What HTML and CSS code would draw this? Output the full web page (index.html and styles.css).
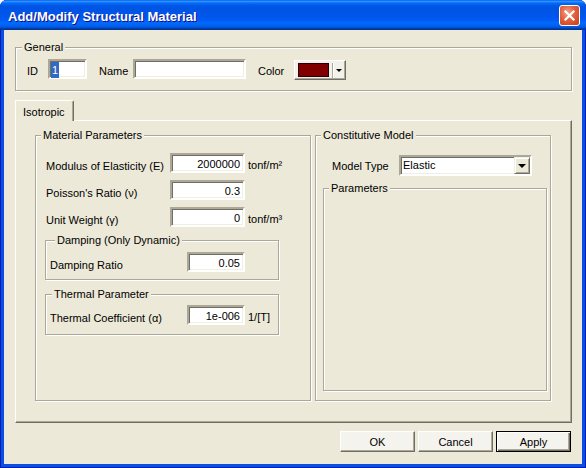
FILE: index.html
```html
<!DOCTYPE html>
<html lang="en">
<head>
    <meta charset="UTF-8">
    <title>Add/Modify Structural Material</title>
    <link rel="stylesheet" href="styles.css">
</head>
<body>
    <div class="window">
        <div class="titlebar">
            <span class="title">Add/Modify Structural Material</span>
            <span class="close-btn">
                <svg width="13" height="13" viewBox="0 0 13 13">
                    <path d="M2.5 2.5 L10.5 10.5 M10.5 2.5 L2.5 10.5" stroke="#fff" stroke-width="2.2" stroke-linecap="square"/>
                </svg>
            </span>
        </div>

        <div class="client">
            <!-- general info -->
            <fieldset class="group general">
                <legend>General</legend>
                <div class="group-body general-row">
                    <span class="lbl lbl-id">ID</span>
                    <div class="edit edit-id"><span class="selected">1</span></div>
                    <span class="lbl lbl-name">Name</span>
                    <div class="edit edit-name"></div>
                    <span class="lbl lbl-color">Color</span>
                    <div class="color-pick">
                        <span class="swatch"></span>
                        <span class="pick-sep"></span>
                        <span class="pick-arrow"></span>
                    </div>
                </div>
            </fieldset>

            <div class="tabs">
                <div class="tab">Isotropic</div>
            </div>

            <div class="tab-page">
                <fieldset class="group material">
                    <legend>Material Parameters</legend>
                    <div class="group-body">
                        <div class="field">
                            <span class="lbl">Modulus of Elasticity (E)</span>
                            <div class="edit edit-wide">2000000</div>
                            <span class="unit">tonf/m²</span>
                        </div>
                        <div class="field">
                            <span class="lbl">Poisson's Ratio (ν)</span>
                            <div class="edit edit-wide">0.3</div>
                        </div>
                        <div class="field">
                            <span class="lbl">Unit Weight (γ)</span>
                            <div class="edit edit-wide">0</div>
                            <span class="unit">tonf/m³</span>
                        </div>

                        <fieldset class="group sub damping">
                            <legend>Damping (Only Dynamic)</legend>
                            <div class="group-body">
                                <div class="field">
                                    <span class="lbl">Damping Ratio</span>
                                    <div class="edit edit-small">0.05</div>
                                </div>
                            </div>
                        </fieldset>

                        <fieldset class="group sub thermal">
                            <legend>Thermal Parameter</legend>
                            <div class="group-body">
                                <div class="field">
                                    <span class="lbl">Thermal Coefficient (α)</span>
                                    <div class="edit edit-small">1e-006</div>
                                    <span class="unit">1/[T]</span>
                                </div>
                            </div>
                        </fieldset>
                    </div>
                </fieldset>

                <fieldset class="group constitutive">
                    <legend>Constitutive Model</legend>
                    <div class="group-body">
                        <div class="field model-row">
                            <span class="lbl">Model Type</span>
                            <div class="combo">
                                <span class="combo-text">Elastic</span>
                                <span class="combo-btn"><span class="combo-arrow"></span></span>
                            </div>
                        </div>
                        <fieldset class="group params">
                            <legend>Parameters</legend>
                        </fieldset>
                    </div>
                </fieldset>
            </div>

            <div class="buttons">
                <button class="btn">OK</button>
                <button class="btn">Cancel</button>
                <button class="btn btn-default">Apply</button>
            </div>
        </div>
    </div>
</body>
</html>
```

FILE: styles.css
```css
* {
    box-sizing: border-box;
}

body {
    margin: 0;
    font-family: "Liberation Sans", Arial, sans-serif;
    font-size: 11px;
    color: #000;
    background: #fff;
}

/* window frame */
.window {
    width: 586px;
    height: 468px;
    display: flex;
    flex-direction: column;
    background: #0a4fe4;
    border-radius: 7px 7px 0 0;
    overflow: hidden;
    box-shadow: inset 1px 0 0 #0019b0, inset -1px 0 0 #0019b0, inset 0 -1px 0 #0019b0;
}

.titlebar {
    height: 30px;
    flex: none;
    display: flex;
    justify-content: space-between;
    align-items: flex-start;
    padding: 0 6px 0 8px;
    background: linear-gradient(to bottom, #0058ee 0%, #3593ff 4%, #288eff 6%, #127dff 8%, #036ffc 10%, #0262ee 14%, #0057e5 20%, #0054e3 24%, #0055eb 56%, #005bf5 66%, #026afe 76%, #0062ef 86%, #0052d6 92%, #0040ab 94%, #003092 100%);
}

.title {
    padding-top: 3px;
    line-height: 28px;
    font-size: 13px;
    font-weight: bold;
    color: #fff;
    text-shadow: 1px 1px 0 #0f1089;
}

.close-btn {
    margin-top: 5px;
    width: 21px;
    height: 21px;
    display: flex;
    align-items: center;
    justify-content: center;
    border: 1px solid #fff;
    border-radius: 3px;
    background: radial-gradient(circle at 40% 35%, #f2a58c 0%, #e2603f 45%, #c93b1d 100%);
}

.client {
    flex: 1;
    margin: 0 4px 4px;
    padding: 11px 10px 0 11px;
    background: #ece9d8;
}

/* group boxes */
.group {
    margin: 0;
    padding: 0;
    min-width: 0;
    border: 1px solid #aca899;
    box-shadow: 1px 1px 0 #fff, inset 1px 1px 0 #fff;
}

.group legend {
    padding: 0 2px;
    margin-left: 5px;
    line-height: 13px;
    height: 13px;
    background: #ece9d8;
}

.lbl {
    line-height: 13px;
    margin-top: 6px;
    white-space: nowrap;
}

.unit {
    line-height: 13px;
    margin-top: 6px;
    margin-left: 3px;
}

/* sunken edit box */
.edit {
    height: 20px;
    padding: 3px 3px 0;
    line-height: 13px;
    text-align: right;
    background: #fff;
    border: 2px solid;
    border-color: #aca899 #fff #fff #aca899;
    box-shadow: inset 1px 1px 0 #716f64, inset -1px -1px 0 #f1efe2;
    white-space: nowrap;
}

.general legend {
    margin-left: 6px;
}

.general-row {
    display: flex;
    align-items: flex-start;
    padding: 5px 0 10px 11px;
}

.lbl-id {
    width: 21px;
}

.edit-id {
    width: 39px;
    text-align: left;
    padding: 1px 1px 0;
}

.selected {
    display: inline-block;
    padding: 2px 1px 1px;
    background: #316ac5;
    color: #fff;
}

.lbl-name {
    width: 34px;
    margin-left: 12px;
}

.edit-name {
    width: 113px;
}

.lbl-color {
    width: 36px;
    margin-left: 12px;
}

/* color picker button */
.color-pick {
    width: 52px;
    height: 20px;
    display: flex;
    align-items: center;
    padding: 0 3px;
    margin-top: 1px;
    background: #f2f1ea;
    border: 1px solid;
    border-color: #fff #716f64 #716f64 #fff;
    box-shadow: inset -1px -1px 0 #aca899;
}

.swatch {
    width: 33px;
    height: 14px;
    background: #800000;
    border: 1px solid #2a0000;
}

.pick-sep {
    width: 2px;
    height: 15px;
    margin-left: 3px;
    border-left: 1px solid #aca899;
    border-right: 1px solid #fff;
}

.pick-arrow {
    margin-left: 2px;
    width: 0;
    height: 0;
    border-left: 3px solid transparent;
    border-right: 3px solid transparent;
    border-top: 3px solid #000;
}

/* tab control */
.tabs {
    display: flex;
    margin-top: 9px;
}

.tab {
    position: relative;
    z-index: 1;
    width: 59px;
    height: 21px;
    margin-bottom: -1px;
    padding: 5px 0 0 7px;
    line-height: 13px;
    background: #ece9d8;
    border-top: 1px solid #fff;
    border-left: 1px solid #fff;
    border-right: 1px solid #716f64;
    border-radius: 0 2px 0 0;
    box-shadow: inset -1px 0 0 #aca899;
}

.tab-page {
    height: 303px;
    display: flex;
    align-items: flex-start;
    gap: 4px;
    padding: 8px 0 0 19px;
    border: 1px solid;
    border-color: #fff #716f64 #716f64 #fff;
    box-shadow: inset -1px -1px 0 #aca899;
}

.material {
    width: 276px;
    height: 272px;
}

.material > .group-body {
    padding: 11px 0 0 10px;
}

.field {
    display: flex;
    align-items: flex-start;
    height: 20px;
    margin-bottom: 7px;
}

.material .field .lbl {
    width: 124px;
    margin-top: 7px;
}

.edit-wide {
    width: 75px;
}

.sub {
    width: 234px;
    margin-left: -1px;
}

.sub .group-body {
    padding: 5px 0 7px 4px;
}

.sub .field {
    margin-bottom: 0;
}

.sub .field .lbl {
    width: 137px !important;
}

.edit-small {
    width: 58px;
}

.damping {
    margin-top: 7px;
}

.damping legend {
    margin-left: 9px;
}

.thermal {
    margin-top: 8px;
}

.thermal legend {
    margin-left: 6px;
}

.thermal .group-body {
    padding: 4px 0 9px 4px;
}

.constitutive {
    width: 236px;
    height: 272px;
}

.constitutive > .group-body {
    padding: 13px 0 0 7px;
}

.model-row {
    height: 21px;
    margin: 0 0 6px 9px;
}

.model-row .lbl {
    width: 67px;
    margin-top: 5px;
}

/* drop-down list */
.combo {
    width: 133px;
    height: 21px;
    display: flex;
    background: #fff;
    border: 2px solid;
    border-color: #aca899 #fff #fff #aca899;
    box-shadow: inset 1px 1px 0 #716f64, inset -1px -1px 0 #f1efe2;
}

.combo-text {
    flex: 1;
    padding: 2px 0 0 2px;
    line-height: 13px;
}

.combo-btn {
    width: 16px;
    height: 17px;
    display: flex;
    align-items: center;
    justify-content: center;
    background: #ece9d8;
    border: 1px solid;
    border-color: #f1efe2 #716f64 #716f64 #f1efe2;
    box-shadow: inset 1px 1px 0 #fff, inset -1px -1px 0 #aca899;
}

.combo-arrow {
    width: 0;
    height: 0;
    border-left: 4px solid transparent;
    border-right: 4px solid transparent;
    border-top: 4px solid #000;
}

.params {
    width: 224px;
    height: 209px;
}

/* dialog buttons */
.buttons {
    display: flex;
    justify-content: flex-end;
    gap: 3px;
    margin-top: 8px;
    padding-right: 1px;
}

.btn {
    width: 75px;
    height: 21px;
    padding: 0;
    font-family: inherit;
    font-size: 11px;
    color: #000;
    background: #f4f3ee;
    border: 1px solid;
    border-color: #fff #716f64 #716f64 #fff;
    box-shadow: inset -1px -1px 0 #aca899;
}

.btn-default {
    border-color: #000;
    box-shadow: inset 1px 1px 0 #fff, inset -1px -1px 0 #716f64, inset -2px -2px 0 #aca899;
}
```
